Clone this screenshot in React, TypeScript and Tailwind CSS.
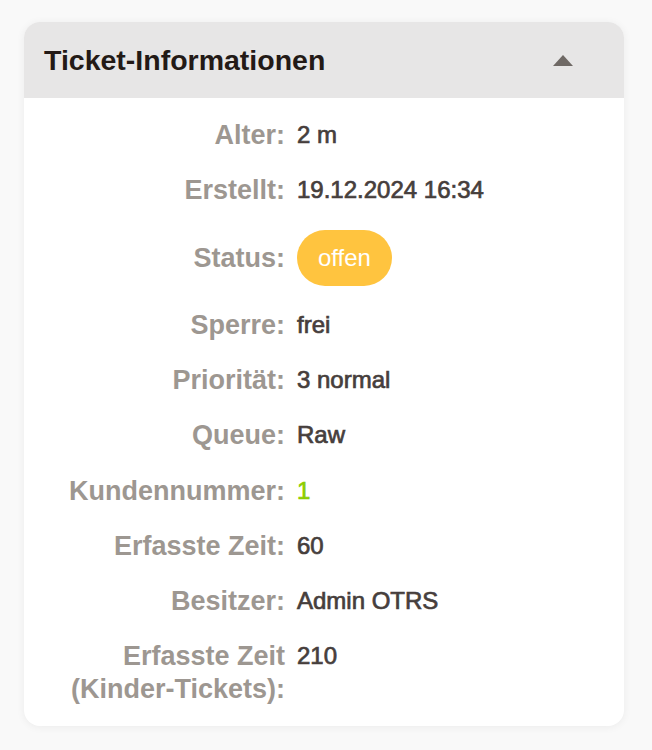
import React from "react";

type Row = { label: React.ReactNode; value: React.ReactNode; pill?: boolean };

const rows: Row[] = [
  { label: "Alter:", value: "2 m" },
  { label: "Erstellt:", value: "19.12.2024 16:34" },
  {
    label: "Status:",
    pill: true,
    value: (
      <span className="inline-flex h-[56px] items-center rounded-full bg-[#ffc43f] px-[21px] text-[24px] font-normal text-white">
        offen
      </span>
    ),
  },
  { label: "Sperre:", value: "frei" },
  { label: "Priorität:", value: "3 normal" },
  { label: "Queue:", value: "Raw" },
  {
    label: "Kundennummer:",
    value: <span className="text-[#8ccd00] [-webkit-text-stroke:0.7px_#8ccd00]">1</span>,
  },
  { label: "Erfasste Zeit:", value: "60" },
  { label: "Besitzer:", value: "Admin OTRS" },
  {
    label: (
      <>
        Erfasste Zeit
        <br />
        (Kinder-Tickets):
      </>
    ),
    value: "210",
  },
];

export default function App() {
  return (
    <div
      className="min-h-[750px] w-full bg-[#f9f9f9] px-[24px] pt-[22px]"
      style={{ fontFamily: '"Liberation Sans", Arial, sans-serif' }}
    >
      <div className="w-[600px] overflow-hidden rounded-[16px] bg-white shadow-[0_1px_8px_rgba(0,0,0,0.06)]">
        <div className="flex h-[76px] items-center justify-between bg-[#e7e6e6] pl-[20px] pr-[51px]">
          <h2 className="text-[28.5px] font-bold leading-none text-[#231a16]">Ticket-Informationen</h2>
          <svg width="20" height="11" viewBox="0 0 20 11" aria-hidden="true">
            <path d="M10 0 L20 11 L0 11 Z" fill="#6f6965" />
          </svg>
        </div>
        <div className="grid grid-cols-[261px_1fr] gap-x-[12px] gap-y-[23.25px] pt-[21px] pb-[20px]">
          {rows.map((r, i) => (
            <React.Fragment key={i}>
              <div
                className={`flex items-center justify-end text-right text-[27px] font-bold text-[#9d9791] ${
                  i === 9 ? "leading-[33px]" : "leading-[32px]"
                }`}
              >
                <span>{r.label}</span>
              </div>
              <div
                className={`flex text-[24px] font-normal leading-[32px] text-[#463e3c] ${
                  r.pill ? "" : "[-webkit-text-stroke:0.7px_#463e3c]"
                } ${i === 9 ? "items-start" : "items-center"}`}
              >
                {r.value}
              </div>
            </React.Fragment>
          ))}
        </div>
      </div>
    </div>
  );
}
